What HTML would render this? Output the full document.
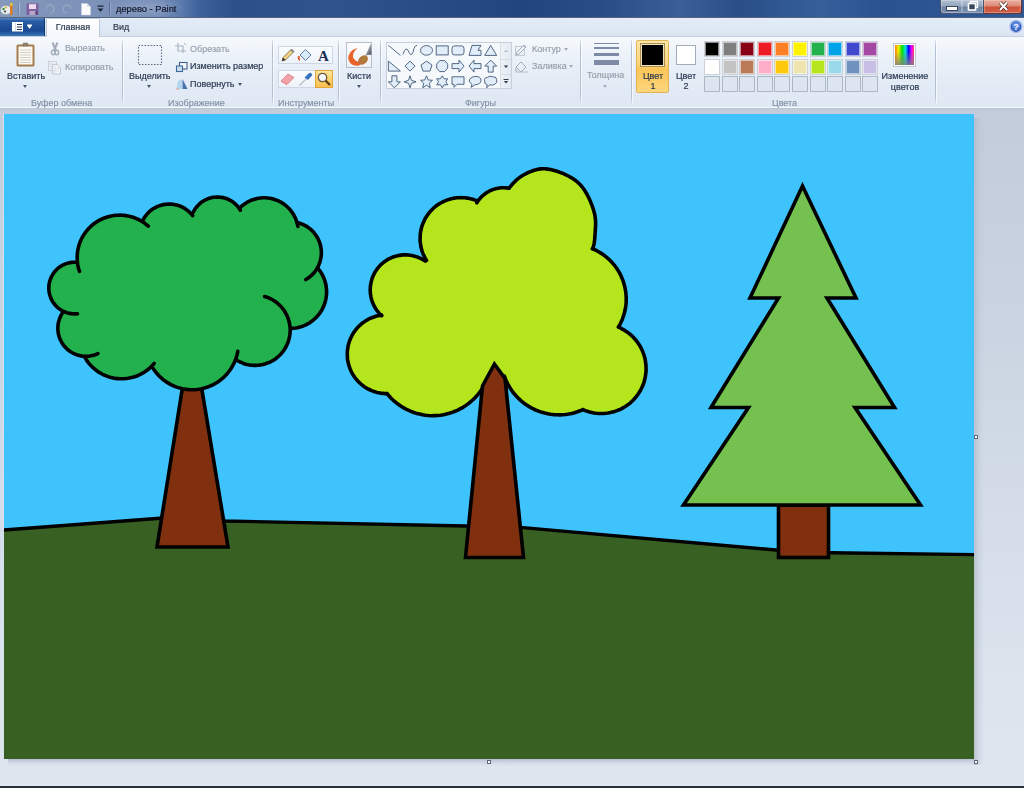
<!DOCTYPE html>
<html><head><meta charset="utf-8">
<style>
*{margin:0;padding:0;box-sizing:border-box}
html,body{width:1024px;height:788px;overflow:hidden;font-family:"Liberation Sans",sans-serif;-webkit-font-smoothing:antialiased}
body{position:relative;background:#dfe6f0}
.abs{position:absolute}
.t,.lbl{will-change:transform}
#title{left:0;top:0;width:1024px;height:18px;background:linear-gradient(90deg,#8599bb 0px,#7d93b9 60px,#7b91b8 110px,#748cb6 160px,#5a79ab 182px,#3d619b 200px,#2c5089 235px,#2e538d 330px,#2a4e88 400px,#23457f 520px,#284c86 600px,#3a5f98 680px,#2a4e88 740px,#35609a 820px,#2b5290 880px,#2f5894 1024px);border-bottom:1px solid #56657e}
#tabs{left:0;top:18px;width:1024px;height:18px;background:linear-gradient(#e3ecf7,#dbe5f2);}
#ribbon{left:0;top:36px;width:1024px;height:72px;background:linear-gradient(#f6f9fd 0%,#e9f0f8 35%,#e2eaf5 70%,#dfe8f3 100%);border-top:1px solid #c5d1e0}
#rbot{left:0;top:107px;width:1024px;height:2px;background:#f4f7fb;border-bottom:1px solid #b9c4d2}
#work{left:0;top:109px;width:1024px;height:679px;background:linear-gradient(#c2ccda 0%,#c8d2e0 25%,#d2dbe7 55%,#dce4ee 85%,#dfe6f0 100%)}
.t{position:absolute;white-space:nowrap;font-size:9px;color:#2b3a52;line-height:10px;letter-spacing:0;-webkit-text-stroke:0.2px currentColor}
.d{color:#939daa;-webkit-text-stroke:0.15px currentColor}
.lbl{position:absolute;white-space:nowrap;font-size:9px;color:#8290a4;line-height:10px;top:98px;-webkit-text-stroke:0.15px currentColor}
.sep{position:absolute;top:40px;width:1px;height:63px;background:linear-gradient(rgba(170,184,204,.3),#b3c0d2 12%,#b3c0d2 88%,rgba(170,184,204,.3));box-shadow:1px 0 0 rgba(255,255,255,.7)}
.arr{position:absolute;width:0;height:0;border-left:2.5px solid transparent;border-right:2.5px solid transparent;border-top:3px solid #44546c}
.cell{position:absolute;width:16px;height:16px;border:1px solid #cdd2da;padding:0;background:#fff}
.cell i{box-shadow:inset 0 0 0 1px rgba(255,255,255,.55)}
.cell i{display:block;width:100%;height:100%}
.ecell{position:absolute;width:16px;height:16px;border:1px solid #aeb7c4;background:#dde5f0}
</style></head><body>
<div id="title" class="abs"></div>
<div id="tabs" class="abs"></div>
<div id="ribbon" class="abs"></div>
<div id="rbot" class="abs"></div>
<div id="work" class="abs"></div>
<svg class="abs" style="left:0px;top:2px" width="14" height="14" viewBox="0 0 14 14"><ellipse cx="6" cy="8" rx="5.5" ry="4.5" fill="#e8eef0" stroke="#8a9aa8" stroke-width=".6"/><circle cx="3.5" cy="7" r="1.2" fill="#3a8a3a"/><circle cx="6" cy="5.5" r="1.1" fill="#d4b020"/><circle cx="5" cy="9.5" r="1.1" fill="#444"/><rect x="10" y="1" width="2.5" height="12" fill="#e07a20"/><rect x="10" y="1" width="2.5" height="3" fill="#e8c040"/></svg>
<div class="abs" style="left:18px;top:2px;width:1px;height:13px;background:#6d84a8;box-shadow:1px 0 0 #a9b9d2"></div>
<svg class="abs" style="left:25px;top:2px" width="15" height="14" viewBox="0 0 15 14"><rect x="1.5" y="1.5" width="12" height="11.5" rx="1" fill="#7d5a9e" opacity=".9"/><rect x="4" y="2.2" width="7" height="4.8" fill="#efdcef"/><rect x="4.5" y="9" width="6" height="4" fill="#b9a3c8"/><rect x="10.5" y="9.5" width="2" height="3" fill="#4f3a70"/></svg>
<svg class="abs" style="left:43px;top:3px" width="13" height="12" viewBox="0 0 13 12"><path d="M3 6 A4 4 0 1 1 7 10" fill="none" stroke="#98a9c2" stroke-width="1.8" opacity=".7"/></svg>
<svg class="abs" style="left:61px;top:3px" width="13" height="12" viewBox="0 0 13 12"><path d="M10 6 A4 4 0 1 0 6 10" fill="none" stroke="#98a9c2" stroke-width="1.8" opacity=".7"/></svg>
<svg class="abs" style="left:80px;top:2px" width="12" height="14" viewBox="0 0 12 14"><path d="M1.5 1.5 H7 L10.5 5 V13 H1.5 Z" fill="#fbfbfd" stroke="#c9d2df" stroke-width=".6"/><path d="M7 1.5 V5 H10.5" fill="#dfe4ec"/></svg>
<svg class="abs" style="left:96px;top:5px" width="9" height="8" viewBox="0 0 9 8"><rect x="1.5" y="0.5" width="6" height="1.2" fill="#1b2434"/><path d="M1.5 3.5 H7.5 L4.5 6.8 Z" fill="#1b2434"/></svg>
<div class="abs" style="left:109px;top:2px;width:1px;height:13px;background:#57709a;box-shadow:1px 0 0 #93a8c8"></div>
<div class="abs" style="left:106px;top:-2px;width:80px;height:20px;background:radial-gradient(ellipse at center,rgba(170,185,215,.45),rgba(170,185,215,0) 70%)"></div>
<div class="t" style="left:116px;top:4px;font-size:9.3px;color:#14182a">дерево - Paint</div>
<div class="abs" style="left:940px;top:0;width:23px;height:14px;border:1px solid rgba(40,55,85,.75);border-top:none;border-radius:0 0 0 3px;box-shadow:inset 0 0 0 1px rgba(255,255,255,.25);background:linear-gradient(#b4c1d4,#95a6be 45%,#6f84a3 55%,#7a90b0)"></div>
<div class="abs" style="left:962px;top:0;width:22px;height:14px;border:1px solid rgba(40,55,85,.75);border-top:none;border-left:none;box-shadow:inset 0 0 0 1px rgba(255,255,255,.25);background:linear-gradient(#b4c1d4,#95a6be 45%,#6f84a3 55%,#7a90b0)"></div>
<div class="abs" style="left:984px;top:0;width:38px;height:14px;border:1px solid rgba(70,30,30,.8);border-top:none;border-left:none;border-radius:0 0 3px 0;box-shadow:inset 0 0 0 1px rgba(255,220,210,.3);background:linear-gradient(#e8b0a2,#de8a76 45%,#cf5138 55%,#d2614a)"></div>
<div class="abs" style="left:947px;top:7px;width:10px;height:3px;background:#fff;box-shadow:0 0 0 1px rgba(30,40,60,.7)"></div>
<svg class="abs" style="left:964px;top:0px" width="18" height="13" viewBox="0 0 18 13"><rect x="6.5" y="1.5" width="7" height="6" fill="none" stroke="#fff" stroke-width="1.4"/><rect x="4.5" y="3.5" width="7" height="6.5" fill="#3a465c" stroke="#fff" stroke-width="1.6"/></svg>
<svg class="abs" style="left:996px;top:0px" width="15" height="13" viewBox="0 0 15 13"><path d="M4 2.5 L11 10 M11 2.5 L4 10" stroke="#4a2a28" stroke-width="3.4"/><path d="M4 2.5 L11 10 M11 2.5 L4 10" stroke="#fff" stroke-width="2.1"/></svg>
<div class="abs" style="left:0;top:18px;width:45px;height:18px;background:linear-gradient(#5a88c8 0px,#2a5ca6 3px,#1f4f98 9px,#1b4a92 13px,#2d68ae 16px,#3a76b8 18px);border-right:1px solid #14366e"></div>
<svg class="abs" style="left:10px;top:20px" width="30" height="14" viewBox="0 0 30 14"><rect x="2" y="2" width="11" height="9.5" fill="#fff"/><path d="M5.5 2.5 V11" stroke="#c5d3e6" stroke-width=".8"/><path d="M7 4.5 H12 M7 7 H12 M7 9.5 H12" stroke="#2a3550" stroke-width="1.1"/><path d="M17.5 5 L19.5 8 L21.5 5 Z" fill="#fff" stroke="#fff" stroke-width="1.2" stroke-linejoin="round"/></svg>
<div class="abs" style="left:46px;top:18px;width:54px;height:19px;background:linear-gradient(#ffffff,#f4f7fb);border:1px solid #bccadb;border-bottom:none;border-radius:2px 2px 0 0"></div>
<div class="t" style="left:33px;width:80px;text-align:center;top:22.4px;color:#2c3a4f">Главная</div>
<div class="t" style="left:113px;top:22.4px;color:#2c3a4f">Вид</div>
<svg class="abs" style="left:1008px;top:18px" width="17" height="17" viewBox="0 0 17 17"><circle cx="8" cy="8.5" r="6" fill="#3a66c6" stroke="#a9bde6" stroke-width="1.2"/><circle cx="8" cy="7" r="4" fill="#6f9ae6" opacity=".6"/><text x="8" y="12" font-family="Liberation Sans" font-size="9" font-weight="bold" text-anchor="middle" fill="#fff">?</text></svg>
<svg class="abs" style="left:14px;top:41px" width="24" height="28" viewBox="0 0 24 28"><rect x="2.5" y="3.5" width="18" height="22" rx="1.5" fill="#a37c4a"/><rect x="4.5" y="5.5" width="14" height="18" fill="#fbfaf6"/><path d="M6 9 H17 M6 11.5 H17 M6 14 H17 M6 16.5 H17 M6 19 H17 M6 21.5 H17" stroke="#c9c3b5" stroke-width=".8"/><rect x="9" y="2" width="5" height="3" rx=".8" fill="#8f8774" stroke="#6a604c" stroke-width=".5"/></svg>
<div class="t" style="left:6.6px;top:71.0px;">Вставить</div>
<div class="arr" style="left:22.9px;top:84.5px;border-top-color:#44546c"></div>
<svg class="abs" style="left:49px;top:41px" width="12" height="15" viewBox="0 0 12 15"><path d="M3.5 1.5 L7 9.5 M8.5 1.5 L5 9.5" stroke="#a3adb9" stroke-width="2"/><ellipse cx="4.3" cy="11.5" rx="1.9" ry="2.2" fill="none" stroke="#a3adb9" stroke-width="1.4"/><ellipse cx="7.7" cy="11.5" rx="1.9" ry="2.2" fill="none" stroke="#a3adb9" stroke-width="1.4"/></svg>
<div class="t d" style="left:64.7px;top:43.1px;">Вырезать</div>
<svg class="abs" style="left:47px;top:59px" width="16" height="16" viewBox="0 0 16 16"><rect x="1.5" y="2.5" width="8" height="9" fill="#eef1f5" stroke="#c3cad4" stroke-width=".8"/><path d="M1.5 5 H9.5 M1.5 7.5 H9.5 M4 2.5 V11.5" stroke="#d3d9e1" stroke-width=".6"/><path d="M5.5 5.5 H10 L13.5 9 V15 H5.5 Z" fill="#f3f5f8" stroke="#b5bdc8" stroke-width=".8"/><path d="M5.5 9.5 H13.5 M5.5 12 H13.5 M8 5.5 V15" stroke="#d3d9e1" stroke-width=".6"/></svg>
<div class="t d" style="left:64.7px;top:61.5px;">Копировать</div>
<div class="lbl" style="left:30.5px;top:97.0px;top:97.7px">Буфер обмена</div>
<div class="sep" style="left:122px"></div>
<svg class="abs" style="left:136px;top:43px" width="28" height="24" viewBox="0 0 28 24"><rect x="2.5" y="2.5" width="23" height="19" fill="none" stroke="#5a6b86" stroke-width="1.1" stroke-dasharray="1.6 1.4"/></svg>
<div class="t" style="left:129.4px;top:70.7px;">Выделить</div>
<div class="arr" style="left:146.5px;top:84.5px;border-top-color:#44546c"></div>
<svg class="abs" style="left:174px;top:42px" width="14" height="12" viewBox="0 0 14 12"><path d="M4 1 V9 H12 M1 4 H9 V11" fill="none" stroke="#aab3c0" stroke-width="1.2"/><path d="M10 1 L12 3" stroke="#aab3c0" stroke-width="1"/></svg>
<div class="t d" style="left:190.3px;top:43.7px;">Обрезать</div>
<svg class="abs" style="left:175px;top:61px" width="14" height="12" viewBox="0 0 14 12"><rect x="4.5" y="1.5" width="7.5" height="6.5" fill="#f4f8fc" stroke="#3f5f88" stroke-width="1.1"/><rect x="1.5" y="5" width="6" height="5.5" fill="#c9dcef" stroke="#3f6a98" stroke-width="1.1"/></svg>
<div class="t" style="left:190px;top:60.9px;">Изменить размер</div>
<svg class="abs" style="left:175px;top:78px" width="14" height="12" viewBox="0 0 14 12"><path d="M7.5 1 L12.5 11 H7.5 Z" fill="#4a73ad"/><path d="M1.5 11 L3 3 Q5 1.5 7 1.5 V11 Z" fill="#b3d6ef"/><path d="M1 11 H4" stroke="#e79a8a" stroke-width="1"/></svg>
<div class="t" style="left:190px;top:78.8px;">Повернуть</div>
<div class="arr" style="left:237.8px;top:82.9px;border-top-color:#44546c"></div>
<div class="lbl" style="left:167.7px;top:97.3px;top:98px">Изображение</div>
<div class="sep" style="left:272px"></div>
<div class="abs" style="left:278px;top:46px;width:55px;height:18px;border:1px solid #cdd6e2;background:linear-gradient(#fafcfe,#eef3f9)"></div>
<div class="abs" style="left:278px;top:70px;width:55px;height:18px;border:1px solid #cdd6e2;background:linear-gradient(#fafcfe,#eef3f9)"></div>
<div class="abs" style="left:315px;top:70px;width:18px;height:18px;border:1px solid #e2a53e;background:linear-gradient(#fde7a0,#fbd06a 50%,#f9c04e)"></div>
<svg class="abs" style="left:279px;top:47px" width="17" height="16" viewBox="0 0 17 16"><path d="M3 14 L4 10.5 L12.5 2 L15 4.5 L6.5 13 Z" fill="#f2d383" stroke="#7b6a46" stroke-width=".8"/><path d="M3 14 L4 10.5 L6.5 13 Z" fill="#333"/><path d="M12.5 2 L15 4.5 L13.8 5.7 L11.3 3.2 Z" fill="#888"/></svg>
<svg class="abs" style="left:297px;top:47px" width="17" height="16" viewBox="0 0 17 16"><path d="M8.5 2.5 L14 8 L8.5 13.5 L3 8 Z" fill="#d8ecf8" stroke="#5a7ea8" stroke-width="1"/><path d="M2 9 Q1 12 3 13" fill="none" stroke="#e0603a" stroke-width="2"/></svg>
<svg class="abs" style="left:315px;top:47px" width="17" height="16" viewBox="0 0 17 16"><text x="8.5" y="13.5" font-family="Liberation Serif" font-size="15" font-weight="bold" text-anchor="middle" fill="#1c2e55">A</text></svg>
<svg class="abs" style="left:279px;top:71px" width="17" height="16" viewBox="0 0 17 16"><path d="M2 10 L9 3 L15 6.5 L8 13.5 Z" fill="#f2a3a8" stroke="#d27a80" stroke-width=".8"/><path d="M2 10 L8 13.5 L8.5 14.5 L2.5 11 Z" fill="#e08088"/></svg>
<svg class="abs" style="left:297px;top:71px" width="17" height="16" viewBox="0 0 17 16"><path d="M2.5 14.5 L9 8" stroke="#b9c2cc" stroke-width="1.5"/><path d="M8 6.5 L12 2.5 Q14.5 1.5 15 4 L11 8.5 Z" fill="#2f74cc" stroke="#1f4f90" stroke-width=".6"/></svg>
<svg class="abs" style="left:315px;top:71px" width="18" height="16" viewBox="0 0 18 16"><circle cx="7.5" cy="6.5" r="4.2" fill="#f4f7fb" stroke="#6c5a3e" stroke-width="1.3"/><path d="M10.5 9.5 L15 14" stroke="#5b3a1a" stroke-width="2.2"/></svg>
<div class="lbl" style="left:277.6px;top:97.2px;top:98px">Инструменты</div>
<div class="sep" style="left:338px"></div>
<div class="abs" style="left:346px;top:42px;width:26px;height:26px;border:1px solid #b5bfcc;background:linear-gradient(#fdfdfe,#eef1f5)"></div>
<svg class="abs" style="left:346px;top:42px" width="26" height="26" viewBox="0 0 26 26"><defs><linearGradient id="hg" x1="0" y1="0" x2="1" y2="1"><stop offset="0" stop-color="#e8ebf0"/><stop offset="1" stop-color="#3c4452"/></linearGradient></defs><path d="M11.5 6 C5 7.5 1.5 13 2.5 17.5 C3.5 22 8 24.5 13 23.5 L17 20.5 C12 20.5 8 18.5 7 15 C6.5 11.5 8.5 8.5 11.5 6 Z" fill="#e8632a"/><path d="M19.5 13.5 L25 1.5 L25.5 12.5 Z" fill="url(#hg)"/><ellipse cx="17" cy="18" rx="5.5" ry="4" transform="rotate(-40 17 18)" fill="#b8743a"/><ellipse cx="18" cy="17" rx="3" ry="2" transform="rotate(-40 18 17)" fill="#9a8a3a" opacity=".6"/></svg>
<div class="t" style="left:346.8px;top:70.8px;">Кисти</div>
<div class="arr" style="left:356.5px;top:84.5px;border-top-color:#44546c"></div>
<div class="sep" style="left:380px"></div>
<div class="abs" style="left:386px;top:42px;width:126px;height:47px;border:1px solid #c6d0dc;background:#f6f9fc"></div>
<div class="abs" style="left:500px;top:43px;width:11px;height:45px;border-left:1px solid #d6dee8;background:linear-gradient(90deg,#eef2f7,#e3e9f1)"></div>
<div class="abs" style="left:501px;top:59px;width:10px;height:1px;background:#d5dde7"></div><div class="abs" style="left:501px;top:74px;width:10px;height:1px;background:#d5dde7"></div>
<svg class="abs" style="left:501px;top:44px" width="10" height="44" viewBox="0 0 10 44"><path d="M3 8 L5 6 L7 8 Z" fill="#a9b3c0"/><path d="M2.8 21.5 H7.2 L5 24 Z" fill="#2f3d52"/><rect x="2.5" y="35" width="5" height="1" fill="#2f3d52"/><path d="M2.8 37 H7.2 L5 39.5 Z" fill="#2f3d52"/></svg>
<svg class="abs" style="left:386px;top:42px" width="114" height="47" viewBox="0 0 114 47"><path transform="translate(8.399999999999977,8.399999999999999)" d="M-6 -5 L6 5" fill="none" stroke="#3f5877" stroke-width=".9" stroke-linejoin="round"/><path transform="translate(24,8.399999999999999)" d="M-7 4 Q-4 -6 -1 2 Q2 8 4 -2 Q5 -5 7 -5" fill="none" stroke="#3f5877" stroke-width=".9" stroke-linejoin="round"/><ellipse cx="40.5" cy="8.399999999999999" rx="6" ry="4.8" fill="#e1eef9" stroke="#3f5877" stroke-width=".9"/><rect x="50.19999999999999" y="3.8999999999999986" width="12" height="9" fill="#e1eef9" stroke="#3f5877" stroke-width=".9"/><rect x="66" y="3.8999999999999986" width="12" height="9" rx="2.5" fill="#e1eef9" stroke="#3f5877" stroke-width=".9"/><path transform="translate(89,8.399999999999999)" d="M-6 5 L-3 -5 H6 L3 0 H6 V5 Z" fill="#e1eef9" stroke="#3f5877" stroke-width=".9" stroke-linejoin="round"/><path transform="translate(104.69999999999999,8.399999999999999)" d="M0 -5 L6 5 H-6 Z" fill="#e1eef9" stroke="#3f5877" stroke-width=".9" stroke-linejoin="round"/><path transform="translate(8.399999999999977,24.099999999999994)" d="M-6 -5 L6 5 H-6 Z" fill="#e1eef9" stroke="#3f5877" stroke-width=".9" stroke-linejoin="round"/><path transform="translate(24,24.099999999999994)" d="M0 -5 L5 0 L0 5 L-5 0 Z" fill="#e1eef9" stroke="#3f5877" stroke-width=".9" stroke-linejoin="round"/><path transform="translate(40.5,24.099999999999994)" d="M0 -5 L5.5 -1 L3.5 5 H-3.5 L-5.5 -1 Z" fill="#e1eef9" stroke="#3f5877" stroke-width=".9" stroke-linejoin="round"/><path transform="translate(56.19999999999999,24.099999999999994)" d="M-2.5 -5.5 H2.5 L5.5 -2 V2 L2.5 5.5 H-2.5 L-5.5 2 V-2 Z" fill="#e1eef9" stroke="#3f5877" stroke-width=".9" stroke-linejoin="round"/><path transform="translate(72,24.099999999999994)" d="M-6 -2.5 H1 V-6 L6 0 L1 6 V2.5 H-6 Z" fill="#e1eef9" stroke="#3f5877" stroke-width=".9" stroke-linejoin="round"/><path transform="translate(89,24.099999999999994)" d="M6 -2.5 H-1 V-6 L-6 0 L-1 6 V2.5 H6 Z" fill="#e1eef9" stroke="#3f5877" stroke-width=".9" stroke-linejoin="round"/><path transform="translate(104.69999999999999,24.099999999999994)" d="M-2.5 6 V0 H-6 L0 -6 L6 0 H2.5 V6 Z" fill="#e1eef9" stroke="#3f5877" stroke-width=".9" stroke-linejoin="round"/><path transform="translate(8.399999999999977,39.8)" d="M-2.5 -6 V0 H-6 L0 6 L6 0 H2.5 V-6 Z" fill="#e1eef9" stroke="#3f5877" stroke-width=".9" stroke-linejoin="round"/><path transform="translate(24,39.8)" d="M0 -6 L1.5 -1.5 L6 0 L1.5 1.5 L0 6 L-1.5 1.5 L-6 0 L-1.5 -1.5 Z" fill="#e1eef9" stroke="#3f5877" stroke-width=".9" stroke-linejoin="round"/><path transform="translate(40.5,39.8)" d="M0 -6 L1.8 -1.8 L6 -1.5 L2.8 1.5 L3.8 6 L0 3.5 L-3.8 6 L-2.8 1.5 L-6 -1.5 L-1.8 -1.8 Z" fill="#e1eef9" stroke="#3f5877" stroke-width=".9" stroke-linejoin="round"/><path transform="translate(56.19999999999999,39.8)" d="M0 -6 L1.8 -3 H5.5 L3.6 0 L5.5 3 H1.8 L0 6 L-1.8 3 H-5.5 L-3.6 0 L-5.5 -3 H-1.8 Z" fill="#e1eef9" stroke="#3f5877" stroke-width=".9" stroke-linejoin="round"/><path transform="translate(72,39.8)" d="M-6 -5 H6 V2.5 H-1 L-4 5.5 V2.5 H-6 Z" fill="#e1eef9" stroke="#3f5877" stroke-width=".9" stroke-linejoin="round"/><path transform="translate(89,39.8)" d="M-4 5.5 L-3 2.5 Q-7 0 -5.5 -2.5 Q-3 -5.5 1 -5.5 Q6 -5 6 -1.5 Q6 2.5 0 3 Z" fill="#e1eef9" stroke="#3f5877" stroke-width=".9" stroke-linejoin="round"/><path transform="translate(104.69999999999999,39.8)" d="M-4 6 L-3.5 3 Q-7 2 -6 -1 Q-7 -4 -3 -4.5 Q-1 -6.5 2 -5 Q6 -5.5 6 -2 Q7 1 4 2.5 Q2 4 -1 3 Z" fill="#e1eef9" stroke="#3f5877" stroke-width=".9" stroke-linejoin="round"/></svg>
<svg class="abs" style="left:514px;top:43px" width="16" height="14" viewBox="0 0 16 14"><path d="M2 12 L3 9 L10 2 L12 4 L5 11 Z" fill="none" stroke="#a3adba" stroke-width="1"/><rect x="1.5" y="3.5" width="9" height="9" fill="none" stroke="#b6bfca" stroke-width=".8"/></svg>
<div class="t d" style="left:531.7px;top:43.7px;">Контур</div>
<div class="arr" style="left:563.8px;top:47.5px;border-top-color:#a3adba"></div>
<svg class="abs" style="left:514px;top:60px" width="16" height="14" viewBox="0 0 16 14"><path d="M2 12 H14" stroke="#b6bfca" stroke-width="1"/><path d="M7 2 L12 7 L7 12 L2 7 Z" fill="none" stroke="#a3adba" stroke-width="1"/><path d="M2 8 Q1 11 3 12" fill="none" stroke="#b3bcc8" stroke-width="1.3"/></svg>
<div class="t d" style="left:531.7px;top:60.9px;">Заливка</div>
<div class="arr" style="left:568.8px;top:64.5px;border-top-color:#a3adba"></div>
<div class="lbl" style="left:464.8px;top:97.4px;top:98px">Фигуры</div>
<div class="sep" style="left:580px"></div>
<div class="abs" style="left:594px;top:42.5px;width:25px;height:1px;background:#7d8ba6"></div>
<div class="abs" style="left:594px;top:47px;width:25px;height:2px;background:#7d8ba6"></div>
<div class="abs" style="left:594px;top:52.5px;width:25px;height:3px;background:#7d8ba6"></div>
<div class="abs" style="left:594px;top:59.5px;width:25px;height:5px;background:#7d8ba6"></div>
<div class="t d" style="left:586.5px;top:70.4px;">Толщина</div>
<div class="arr" style="left:603.1px;top:84.5px;border-top-color:#a3adba"></div>
<div class="sep" style="left:631px"></div>
<div class="abs" style="left:636px;top:40px;width:33px;height:53px;border:1px solid #e6b054;border-radius:2px;background:linear-gradient(#fde9a8,#fcd57a 45%,#fbc658 55%,#fcd67c)"></div>
<div class="abs" style="left:640px;top:43px;width:25px;height:24px;border:1px solid #a98b55;background:#000;box-shadow:inset 0 0 0 1px #f4e3b8"></div>
<div class="abs" style="left:642px;top:45px;width:21px;height:20px;background:#000"></div>
<div class="t" style="left:612.5px;width:80px;text-align:center;top:70.8px;color:#2b3648">Цвет</div>
<div class="t" style="left:612.5px;width:80px;text-align:center;top:81.1px;color:#2b3648">1</div>
<div class="abs" style="left:676px;top:45px;width:20px;height:20px;border:1px solid #a2abb8;background:#fff"></div>
<div class="t" style="left:646px;width:80px;text-align:center;top:70.8px;">Цвет</div>
<div class="t" style="left:646px;width:80px;text-align:center;top:81.1px;">2</div>
<div class="cell" style="left:704.0px;top:41px"><i style="background:#000000"></i></div>
<div class="cell" style="left:721.6px;top:41px"><i style="background:#7f7f7f"></i></div>
<div class="cell" style="left:739.2px;top:41px"><i style="background:#880015"></i></div>
<div class="cell" style="left:756.8px;top:41px"><i style="background:#ed1c24"></i></div>
<div class="cell" style="left:774.4px;top:41px"><i style="background:#ff7f27"></i></div>
<div class="cell" style="left:792.0px;top:41px"><i style="background:#fff200"></i></div>
<div class="cell" style="left:809.6px;top:41px"><i style="background:#22b14c"></i></div>
<div class="cell" style="left:827.2px;top:41px"><i style="background:#00a2e8"></i></div>
<div class="cell" style="left:844.8px;top:41px"><i style="background:#3f48cc"></i></div>
<div class="cell" style="left:862.4px;top:41px"><i style="background:#a349a4"></i></div>
<div class="cell" style="left:704.0px;top:58.5px"><i style="background:#ffffff"></i></div>
<div class="cell" style="left:721.6px;top:58.5px"><i style="background:#c3c3c3"></i></div>
<div class="cell" style="left:739.2px;top:58.5px"><i style="background:#b97a57"></i></div>
<div class="cell" style="left:756.8px;top:58.5px"><i style="background:#ffaec9"></i></div>
<div class="cell" style="left:774.4px;top:58.5px"><i style="background:#ffc90e"></i></div>
<div class="cell" style="left:792.0px;top:58.5px"><i style="background:#efe4b0"></i></div>
<div class="cell" style="left:809.6px;top:58.5px"><i style="background:#b5e61d"></i></div>
<div class="cell" style="left:827.2px;top:58.5px"><i style="background:#99d9ea"></i></div>
<div class="cell" style="left:844.8px;top:58.5px"><i style="background:#7092be"></i></div>
<div class="cell" style="left:862.4px;top:58.5px"><i style="background:#c8bfe7"></i></div>
<div class="ecell" style="left:704.0px;top:76px"></div>
<div class="ecell" style="left:721.6px;top:76px"></div>
<div class="ecell" style="left:739.2px;top:76px"></div>
<div class="ecell" style="left:756.8px;top:76px"></div>
<div class="ecell" style="left:774.4px;top:76px"></div>
<div class="ecell" style="left:792.0px;top:76px"></div>
<div class="ecell" style="left:809.6px;top:76px"></div>
<div class="ecell" style="left:827.2px;top:76px"></div>
<div class="ecell" style="left:844.8px;top:76px"></div>
<div class="ecell" style="left:862.4px;top:76px"></div>
<div class="abs" style="left:893px;top:43px;width:23px;height:24px;border:1px solid #c3c9d2;padding:1px;background:#fff"><div style="width:100%;height:100%;background:linear-gradient(rgba(128,128,128,0) 30%,rgba(128,128,128,.85) 100%),linear-gradient(90deg,#ff8000,#f0f000 18%,#00e000 38%,#00e0e0 55%,#0000ff 72%,#ff00ff 88%,#ff4060)"></div></div>
<div class="t" style="left:864.7px;width:80px;text-align:center;top:70.9px;">Изменение</div>
<div class="t" style="left:864.5px;width:80px;text-align:center;top:81.7px;">цветов</div>
<div class="lbl" style="left:771.7px;top:97.1px;top:98px">Цвета</div>
<div class="sep" style="left:935px"></div>
<svg class="abs" style="left:0;top:0" width="1024" height="788" viewBox="0 0 1024 788">
<defs><clipPath id="cv"><rect x="4" y="114" width="970" height="645"/></clipPath>
<linearGradient id="shr" x1="0" x2="1" y1="0" y2="0"><stop offset="0" stop-color="#aeb8c6" stop-opacity=".75"/><stop offset=".5" stop-color="#b8c2cf" stop-opacity=".35"/><stop offset="1" stop-color="#c0c9d6" stop-opacity="0"/></linearGradient>
<linearGradient id="shb" x1="0" x2="0" y1="0" y2="1"><stop offset="0" stop-color="#aab5c8" stop-opacity=".8"/><stop offset=".5" stop-color="#b8c2d4" stop-opacity=".4"/><stop offset="1" stop-color="#c0c9d6" stop-opacity="0"/></linearGradient></defs>
<rect x="974" y="118" width="10" height="647" fill="url(#shr)"/>
<rect x="8" y="759" width="966" height="7" fill="url(#shb)"/>
<rect x="3" y="114" width="1" height="645" fill="#d8e0f2"/>
<rect x="4" y="114" width="970" height="645" fill="#3ec3fd"/>
<g clip-path="url(#cv)">
<path d="M4 530 L160 518.3 Q192 516 225 521 L466 526 L523 527.6 L776 550 Q800 552.2 830 552.7 L974 554.7 L974 759 L4 759 Z" fill="#376022"/>
<path d="M2 530.2 L160 518.3 Q192 516 225 521 L466 526 L523 527.6 L776 550 Q800 552.2 830 552.7 L976 554.7" fill="none" stroke="#000" stroke-width="3.4"/>
<polygon points="184,378 200,378 228,547 157,547" fill="#80300e" stroke="#000" stroke-width="3.6" stroke-linejoin="miter"/>
<polygon points="77.5,262.9 77.3,260.7 77.2,258.5 77.2,256.3 77.3,254.1 77.5,251.9 77.9,249.7 78.4,247.5 79.0,245.4 79.6,243.3 80.5,241.2 81.4,239.2 82.4,237.2 83.5,235.3 84.7,233.4 86.0,231.7 87.4,229.9 88.9,228.3 90.5,226.7 92.1,225.2 93.8,223.9 95.6,222.6 97.5,221.3 99.4,220.2 101.4,219.2 103.4,218.3 105.5,217.5 107.6,216.9 109.8,216.3 111.9,215.8 114.1,215.5 116.3,215.3 118.5,215.1 120.8,215.1 123.0,215.3 125.2,215.5 127.4,215.8 129.5,216.3 131.7,216.9 133.8,217.5 135.9,218.3 137.9,219.2 139.9,220.2 141.8,221.3 142.7,220.7 143.4,219.3 144.1,218.0 145.0,216.7 145.9,215.5 146.8,214.3 147.9,213.2 148.9,212.1 150.1,211.1 151.3,210.1 152.5,209.2 153.8,208.4 155.1,207.6 156.5,206.9 157.9,206.3 159.3,205.8 160.7,205.3 162.2,204.9 163.7,204.6 165.2,204.3 166.7,204.1 168.2,204.1 169.8,204.0 171.3,204.1 172.8,204.3 174.3,204.5 175.8,204.8 177.3,205.2 178.7,205.6 180.2,206.2 181.6,206.8 182.9,207.4 184.3,208.2 185.6,209.0 186.8,209.9 188.0,210.8 189.2,211.8 190.3,212.9 191.3,214.0 193.1,212.6 193.7,211.3 194.4,210.1 195.1,209.0 195.9,207.9 196.7,206.8 197.6,205.7 198.6,204.8 199.6,203.8 200.6,202.9 201.7,202.1 202.8,201.3 204.0,200.6 205.2,200.0 206.4,199.4 207.7,198.8 209.0,198.4 210.3,198.0 211.6,197.7 212.9,197.4 214.3,197.2 215.6,197.1 217.0,197.0 218.4,197.0 219.7,197.1 221.1,197.3 222.4,197.5 223.8,197.8 225.1,198.2 226.4,198.6 227.7,199.1 228.9,199.7 230.1,200.3 231.3,201.0 232.4,201.7 233.6,202.5 234.6,203.4 235.6,204.3 236.6,205.2 237.5,206.2 238.4,207.3 239.2,208.4 240.1,207.6 241.4,206.4 242.8,205.3 244.2,204.2 245.6,203.2 247.1,202.3 248.7,201.4 250.3,200.7 251.9,200.0 253.6,199.4 255.3,198.9 257.0,198.5 258.8,198.2 260.5,198.0 262.3,197.8 264.0,197.8 265.8,197.8 267.6,198.0 269.3,198.2 271.1,198.5 272.8,198.9 274.5,199.4 276.2,200.0 277.8,200.6 279.4,201.4 281.0,202.2 282.5,203.1 284.0,204.1 285.4,205.2 286.7,206.3 288.0,207.5 289.3,208.8 290.4,210.1 291.5,211.5 292.5,213.0 293.5,214.5 294.3,216.0 295.1,217.6 295.8,219.2 296.5,220.9 297.0,222.6 297.2,222.5 298.7,222.9 300.3,223.4 301.8,223.9 303.2,224.6 304.7,225.3 306.1,226.0 307.4,226.9 308.7,227.8 310.0,228.8 311.2,229.8 312.4,230.9 313.5,232.1 314.5,233.3 315.5,234.6 316.4,235.9 317.2,237.2 318.0,238.6 318.7,240.1 319.3,241.6 319.8,243.1 320.3,244.6 320.6,246.1 320.9,247.7 321.2,249.3 321.3,250.9 321.4,252.5 321.3,254.1 321.2,255.7 321.0,257.2 320.7,258.8 320.4,260.4 320.0,261.9 319.4,263.4 318.9,264.9 318.2,266.4 317.4,267.8 317.5,267.8 318.7,269.3 319.9,270.8 320.9,272.4 321.9,274.0 322.8,275.7 323.6,277.4 324.3,279.2 324.9,281.0 325.4,282.8 325.9,284.7 326.2,286.6 326.4,288.5 326.6,290.4 326.6,292.3 326.5,294.2 326.3,296.1 326.1,298.0 325.7,299.9 325.2,301.7 324.7,303.5 324.0,305.3 323.3,307.1 322.4,308.8 321.5,310.5 320.5,312.1 319.4,313.6 318.2,315.1 317.0,316.6 315.7,317.9 314.3,319.2 312.8,320.5 311.3,321.6 309.7,322.7 308.1,323.7 306.4,324.6 304.6,325.4 302.9,326.1 301.1,326.7 299.2,327.2 297.4,327.7 295.5,328.0 293.6,328.2 291.7,328.4 290.1,328.5 290.2,330.3 290.1,332.1 290.0,333.9 289.7,335.7 289.4,337.5 289.0,339.2 288.5,341.0 287.9,342.7 287.2,344.4 286.4,346.0 285.6,347.6 284.6,349.2 283.6,350.7 282.5,352.1 281.4,353.5 280.1,354.8 278.8,356.1 277.5,357.3 276.0,358.4 274.6,359.4 273.0,360.4 271.5,361.3 269.8,362.1 268.2,362.8 266.5,363.5 264.8,364.0 263.0,364.5 261.2,364.8 259.4,365.1 257.6,365.3 255.8,365.4 254.0,365.4 252.2,365.3 250.4,365.1 248.6,364.8 246.8,364.4 245.1,363.9 243.4,363.4 241.7,362.7 240.0,362.0 238.4,361.2 236.8,360.3 235.1,360.8 234.1,363.0 233.0,365.1 231.9,367.2 230.6,369.3 229.2,371.2 227.7,373.1 226.1,374.9 224.4,376.6 222.6,378.3 220.8,379.8 218.8,381.2 216.8,382.6 214.8,383.8 212.6,384.9 210.4,385.9 208.2,386.8 205.9,387.6 203.6,388.3 201.3,388.8 198.9,389.2 196.5,389.5 194.1,389.7 191.7,389.7 189.3,389.6 186.9,389.4 184.5,389.1 182.1,388.6 179.8,388.1 177.5,387.4 175.2,386.5 173.0,385.6 170.8,384.6 168.7,383.4 166.7,382.1 164.7,380.8 162.8,379.3 161.0,377.7 159.2,376.0 157.6,374.3 156.0,372.5 154.5,370.5 153.2,368.6 150.7,367.1 149.1,368.6 147.5,369.9 145.7,371.2 143.9,372.4 142.1,373.5 140.2,374.5 138.2,375.4 136.2,376.2 134.2,376.9 132.1,377.5 130.0,378.0 127.9,378.3 125.8,378.6 123.6,378.8 121.5,378.8 119.3,378.7 117.2,378.6 115.0,378.3 112.9,377.9 110.8,377.4 108.8,376.8 106.7,376.1 104.7,375.3 102.8,374.4 100.9,373.4 99.0,372.3 97.2,371.1 95.5,369.8 93.9,368.4 92.3,367.0 90.8,365.4 89.3,363.8 88.0,362.1 86.7,360.4 85.6,358.6 84.5,356.7 84.0,356.3 82.6,356.1 81.2,355.9 79.7,355.6 78.3,355.3 76.9,354.8 75.6,354.3 74.2,353.8 72.9,353.1 71.6,352.4 70.4,351.6 69.2,350.8 68.1,349.9 67.0,349.0 65.9,347.9 64.9,346.9 64.0,345.8 63.1,344.6 62.3,343.4 61.5,342.1 60.8,340.9 60.2,339.5 59.7,338.2 59.2,336.8 58.8,335.4 58.5,334.0 58.2,332.6 58.0,331.1 57.9,329.7 57.9,328.2 57.9,326.8 58.0,325.3 58.2,323.9 58.5,322.4 58.8,321.0 59.3,319.6 59.7,318.2 60.3,316.9 60.9,315.6 61.6,314.3 62.4,313.1 63.2,311.9 63.7,311.4 62.5,310.8 61.3,310.2 60.2,309.5 59.1,308.7 58.0,307.8 57.0,307.0 56.1,306.0 55.2,305.0 54.3,304.0 53.5,302.9 52.8,301.8 52.1,300.7 51.5,299.5 50.9,298.3 50.4,297.0 50.0,295.8 49.6,294.5 49.3,293.2 49.1,291.9 48.9,290.5 48.9,289.2 48.8,287.9 48.9,286.5 49.0,285.2 49.2,283.9 49.4,282.6 49.7,281.3 50.1,280.0 50.6,278.7 51.1,277.5 51.7,276.3 52.3,275.1 53.0,274.0 53.8,272.9 54.6,271.8 55.4,270.8 56.4,269.8 57.3,268.9 58.4,268.0 59.4,267.2 60.5,266.4 61.6,265.7 62.8,265.1 64.0,264.5 65.3,264.0 66.5,263.5 67.8,263.1 69.1,262.8 70.4,262.6 71.7,262.4 73.1,262.3 74.4,262.2 75.7,262.2 77.1,262.3" fill="#22b14c"/>
<polyline points="79.5,271.4 78.8,269.3 78.2,267.2 77.8,265.0 77.5,262.9 77.3,260.7 77.2,258.5 77.2,256.3 77.3,254.1 77.5,251.9 77.9,249.7 78.4,247.6 78.9,245.4 79.6,243.4 80.4,241.3 81.3,239.3 82.3,237.3 83.4,235.4 84.6,233.6 85.9,231.8 87.3,230.1 88.7,228.5 90.3,226.9 91.9,225.4 93.6,224.0 95.4,222.7 97.2,221.5 99.1,220.4 101.1,219.4 103.1,218.5 105.1,217.7 107.2,217.0 109.3,216.4 111.5,215.9 113.7,215.5 115.8,215.3 118.0,215.2 120.2,215.1 122.4,215.2 124.6,215.4 126.8,215.7 129.0,216.2 131.1,216.7 133.2,217.3 135.3,218.1 137.3,219.0 139.3,219.9 141.2,221.0 143.1,222.1 144.9,223.4 146.6,224.8 148.3,226.2" fill="none" stroke="#000" stroke-width="3.6" stroke-linecap="round" stroke-linejoin="round"/>
<polyline points="142.7,220.7 143.4,219.3 144.1,218.0 144.9,216.8 145.8,215.6 146.8,214.4 147.8,213.3 148.8,212.2 150.0,211.2 151.1,210.2 152.3,209.3 153.6,208.5 154.9,207.8 156.2,207.1 157.6,206.4 159.0,205.9 160.4,205.4 161.9,205.0 163.3,204.6 164.8,204.4 166.3,204.2 167.8,204.1 169.3,204.0 170.8,204.1 172.3,204.2 173.8,204.4 175.3,204.7 176.7,205.0 178.2,205.4 179.6,205.9 181.0,206.5 182.4,207.1 183.7,207.8 185.0,208.6 186.2,209.5 187.4,210.4 188.6,211.3 189.7,212.3 190.8,213.4 191.8,214.5 192.7,215.7" fill="none" stroke="#000" stroke-width="3.6" stroke-linecap="round" stroke-linejoin="round"/>
<polyline points="193.1,212.6 193.7,211.3 194.4,210.1 195.1,208.9 195.9,207.8 196.8,206.7 197.7,205.7 198.7,204.7 199.7,203.7 200.7,202.8 201.8,202.0 203.0,201.2 204.2,200.5 205.4,199.9 206.7,199.3 207.9,198.7 209.2,198.3 210.6,197.9 211.9,197.6 213.3,197.3 214.7,197.2 216.0,197.1 217.4,197.0 218.8,197.1 220.2,197.2 221.6,197.4 222.9,197.6 224.3,197.9 225.6,198.3 226.9,198.8 228.2,199.3 229.4,199.9 230.7,200.6 231.8,201.3 233.0,202.1 234.1,202.9 235.1,203.8 236.1,204.8 237.1,205.8 238.0,206.8 238.9,207.9 239.6,209.1 240.4,210.2" fill="none" stroke="#000" stroke-width="3.6" stroke-linecap="round" stroke-linejoin="round"/>
<polyline points="240.1,207.6 241.4,206.4 242.8,205.2 244.2,204.2 245.7,203.2 247.2,202.3 248.8,201.4 250.4,200.7 252.0,200.0 253.7,199.4 255.4,198.9 257.1,198.5 258.9,198.2 260.6,198.0 262.4,197.8 264.2,197.8 266.0,197.8 267.8,198.0 269.5,198.2 271.3,198.5 273.0,199.0 274.7,199.5 276.4,200.1 278.0,200.7 279.6,201.5 281.2,202.4 282.7,203.3 284.2,204.3 285.6,205.4 286.9,206.5 288.2,207.7 289.5,209.0 290.6,210.4 291.7,211.8 292.7,213.3 293.7,214.8 294.5,216.3 295.3,217.9 296.0,219.6 296.6,221.2 297.1,222.9 297.5,224.7 297.9,226.4" fill="none" stroke="#000" stroke-width="3.6" stroke-linecap="round" stroke-linejoin="round"/>
<polyline points="297.2,222.5 298.8,222.9 300.3,223.4 301.8,224.0 303.3,224.6 304.7,225.3 306.2,226.1 307.5,226.9 308.8,227.9 310.1,228.9 311.3,229.9 312.5,231.0 313.6,232.2 314.6,233.5 315.6,234.8 316.5,236.1 317.3,237.5 318.1,238.9 318.8,240.4 319.4,241.9 319.9,243.4 320.4,244.9 320.7,246.5 321.0,248.1 321.2,249.7 321.3,251.3 321.4,252.9 321.3,254.5 321.2,256.1 320.9,257.7 320.6,259.3 320.3,260.9 319.8,262.4 319.2,263.9 318.6,265.4 317.9,266.9 317.1,268.3 316.3,269.7 315.4,271.0 314.4,272.3 313.3,273.5 312.2,274.7 311.0,275.8 309.8,276.8 308.5,277.8 307.2,278.7 305.8,279.5" fill="none" stroke="#000" stroke-width="3.6" stroke-linecap="round" stroke-linejoin="round"/>
<polyline points="317.5,267.8 318.7,269.3 319.9,270.8 320.9,272.4 321.9,274.0 322.8,275.7 323.6,277.4 324.3,279.2 324.9,281.0 325.4,282.8 325.9,284.7 326.2,286.6 326.4,288.5 326.6,290.4 326.6,292.3 326.5,294.2 326.3,296.1 326.1,298.0 325.7,299.9 325.2,301.7 324.7,303.5 324.0,305.3 323.3,307.1 322.4,308.8 321.5,310.5 320.5,312.1 319.4,313.6 318.2,315.1 317.0,316.6 315.7,317.9 314.3,319.2 312.8,320.5 311.3,321.6 309.7,322.7 308.1,323.7 306.4,324.6 304.6,325.4 302.9,326.1 301.1,326.7 299.2,327.2 297.4,327.7 295.5,328.0 293.6,328.2 291.7,328.4" fill="none" stroke="#000" stroke-width="3.6" stroke-linecap="round" stroke-linejoin="round"/>
<polyline points="264.6,296.5 266.3,297.0 268.0,297.6 269.7,298.4 271.3,299.2 272.9,300.0 274.5,301.0 275.9,302.0 277.4,303.2 278.7,304.3 280.1,305.6 281.3,306.9 282.5,308.3 283.6,309.8 284.6,311.3 285.5,312.8 286.4,314.4 287.2,316.1 287.8,317.7 288.4,319.4 289.0,321.2 289.4,323.0 289.7,324.7 290.0,326.5 290.1,328.3 290.2,330.2 290.1,332.0 290.0,333.8 289.7,335.6 289.4,337.4 289.0,339.1 288.5,340.9 287.9,342.6 287.2,344.3 286.5,345.9 285.6,347.5 284.7,349.1 283.7,350.6 282.6,352.0 281.4,353.4 280.2,354.8 278.9,356.0 277.5,357.2 276.1,358.4 274.6,359.4 273.1,360.4 271.5,361.3 269.9,362.1 268.2,362.8 266.5,363.4 264.8,364.0 263.0,364.5 261.3,364.8 259.5,365.1 257.7,365.3 255.9,365.4 254.0,365.4 252.2,365.3 250.4,365.1 248.6,364.8 246.9,364.4 245.1,363.9 243.4,363.4 241.7,362.7 240.0,362.0 238.4,361.2 236.8,360.3" fill="none" stroke="#000" stroke-width="3.6" stroke-linecap="round" stroke-linejoin="round"/>
<polyline points="237.8,351.3 237.3,353.6 236.7,356.0 236.0,358.3 235.2,360.5 234.2,362.8 233.1,364.9 232.0,367.0 230.7,369.1 229.3,371.0 227.8,372.9 226.2,374.8 224.5,376.5 222.8,378.1 220.9,379.7 219.0,381.1 217.0,382.5 214.9,383.7 212.8,384.9 210.6,385.9 208.3,386.8 206.1,387.6 203.7,388.2 201.4,388.8 199.0,389.2 196.6,389.5 194.2,389.7 191.8,389.7 189.4,389.6 187.0,389.4 184.6,389.1 182.2,388.7 179.9,388.1 177.6,387.4 175.3,386.6 173.1,385.6 170.9,384.6 168.8,383.4 166.7,382.1 164.7,380.8 162.8,379.3 161.0,377.7 159.2,376.1 157.6,374.3 156.0,372.5 154.5,370.5 153.2,368.6" fill="none" stroke="#000" stroke-width="3.6" stroke-linecap="round" stroke-linejoin="round"/>
<polyline points="154.2,363.4 152.8,365.0 151.3,366.6 149.7,368.1 148.0,369.5 146.3,370.8 144.5,372.0 142.6,373.2 140.7,374.2 138.8,375.1 136.8,376.0 134.7,376.7 132.6,377.3 130.5,377.8 128.4,378.3 126.2,378.5 124.1,378.7 121.9,378.8 119.7,378.8 117.6,378.6 115.4,378.4 113.3,378.0 111.2,377.5 109.1,376.9 107.0,376.2 105.0,375.4 103.0,374.5 101.1,373.5 99.2,372.4 97.4,371.2 95.7,369.9 94.0,368.5 92.4,367.1 90.8,365.5 89.4,363.9 88.0,362.2 86.8,360.4 85.6,358.6 84.5,356.7" fill="none" stroke="#000" stroke-width="3.6" stroke-linecap="round" stroke-linejoin="round"/>
<polyline points="97.9,353.6 96.6,354.2 95.2,354.7 93.8,355.2 92.4,355.5 91.0,355.8 89.6,356.1 88.1,356.2 86.7,356.3 85.2,356.3 83.8,356.2 82.4,356.1 80.9,355.9 79.5,355.6 78.1,355.2 76.7,354.8 75.4,354.3 74.0,353.7 72.7,353.0 71.5,352.3 70.2,351.5 69.1,350.7 67.9,349.8 66.8,348.8 65.8,347.8 64.8,346.8 63.9,345.6 63.0,344.5 62.2,343.3 61.5,342.0 60.8,340.7 60.2,339.4 59.6,338.1 59.2,336.7 58.8,335.3 58.4,333.9 58.2,332.5 58.0,331.0 57.9,329.6 57.9,328.1 57.9,326.7 58.0,325.2 58.2,323.8 58.5,322.4 58.8,321.0 59.3,319.6 59.7,318.2 60.3,316.9 60.9,315.6 61.6,314.3 62.4,313.1 63.2,311.9" fill="none" stroke="#000" stroke-width="3.6" stroke-linecap="round" stroke-linejoin="round"/>
<polyline points="77.5,313.7 76.2,313.9 74.8,313.9 73.5,313.9 72.1,313.8 70.8,313.6 69.5,313.4 68.1,313.1 66.8,312.7 65.6,312.2 64.3,311.7 63.1,311.2 61.9,310.5 60.7,309.8 59.6,309.1 58.6,308.3 57.5,307.4 56.5,306.5 55.6,305.5 54.7,304.5 53.9,303.4 53.1,302.3 52.4,301.2 51.7,300.0 51.1,298.8 50.6,297.5 50.2,296.2 49.8,295.0 49.4,293.6 49.2,292.3 49.0,291.0 48.9,289.6 48.8,288.3 48.9,286.9 48.9,285.6 49.1,284.2 49.3,282.9 49.6,281.6 50.0,280.3 50.5,279.0 51.0,277.8 51.5,276.5 52.2,275.4 52.9,274.2 53.6,273.1 54.4,272.0 55.3,271.0 56.2,270.0 57.2,269.0 58.2,268.1 59.3,267.3 60.4,266.5 61.5,265.8 62.7,265.2 63.9,264.6 65.1,264.0 66.4,263.6 67.7,263.2 69.0,262.8 70.3,262.6 71.7,262.4 73.0,262.3 74.4,262.2 75.7,262.2 77.1,262.3" fill="none" stroke="#000" stroke-width="3.6" stroke-linecap="round" stroke-linejoin="round"/>
<polygon points="387.1,393.6 385.0,393.6 383.0,393.4 380.9,393.2 378.9,392.8 376.9,392.4 374.9,391.8 373.0,391.2 371.1,390.4 369.2,389.5 367.4,388.6 365.6,387.5 363.9,386.4 362.3,385.1 360.7,383.8 359.2,382.4 357.7,381.0 356.4,379.4 355.1,377.8 353.9,376.1 352.8,374.4 351.8,372.6 350.9,370.7 350.1,368.9 349.4,366.9 348.8,365.0 348.3,363.0 347.8,361.0 347.5,358.9 347.4,356.9 347.3,354.8 347.3,352.8 347.4,350.7 347.7,348.7 348.0,346.6 348.4,344.6 349.0,342.7 349.6,340.7 350.4,338.8 351.3,336.9 352.2,335.1 353.2,333.3 354.4,331.6 355.6,330.0 356.9,328.4 358.3,326.8 359.8,325.4 361.3,324.0 362.9,322.8 364.6,321.6 366.3,320.5 368.1,319.4 369.9,318.5 371.8,317.7 373.8,317.0 375.7,316.3 377.7,315.8 379.7,315.4 381.7,315.1 381.6,315.7 380.3,314.4 379.1,313.1 377.9,311.7 376.8,310.3 375.8,308.8 374.8,307.2 374.0,305.6 373.2,304.0 372.5,302.3 371.9,300.6 371.4,298.9 371.0,297.1 370.7,295.3 370.4,293.5 370.3,291.7 370.2,289.9 370.3,288.1 370.4,286.3 370.7,284.5 371.0,282.7 371.4,280.9 371.9,279.2 372.5,277.4 373.2,275.8 374.0,274.1 374.8,272.5 375.8,271.0 376.8,269.5 377.9,268.0 379.1,266.6 380.3,265.3 381.6,264.0 383.0,262.9 384.4,261.7 385.9,260.7 387.4,259.7 389.0,258.9 390.6,258.1 392.3,257.3 394.0,256.7 395.7,256.2 397.5,255.7 399.3,255.4 401.1,255.1 402.9,254.9 404.7,254.9 406.5,254.9 408.3,255.0 410.1,255.2 411.9,255.5 413.7,255.9 415.4,256.4 417.2,257.0 418.8,257.6 420.5,258.4 422.1,259.2 423.7,260.1 425.2,261.1 426.5,260.4 425.4,258.6 424.4,256.7 423.5,254.8 422.7,252.8 422.0,250.8 421.4,248.8 420.9,246.7 420.6,244.6 420.3,242.5 420.1,240.3 420.1,238.2 420.2,236.1 420.3,234.0 420.6,231.8 421.0,229.7 421.5,227.7 422.1,225.6 422.9,223.6 423.7,221.7 424.6,219.7 425.6,217.9 426.8,216.1 428.0,214.3 429.3,212.6 430.7,211.0 432.2,209.5 433.7,208.0 435.3,206.6 437.0,205.3 438.8,204.1 440.6,203.0 442.5,202.0 444.4,201.1 446.4,200.3 448.4,199.6 450.4,199.0 452.5,198.5 454.6,198.1 456.7,197.8 458.8,197.7 461.0,197.6 463.1,197.7 465.2,197.8 467.3,198.1 469.4,198.5 471.5,199.0 473.6,199.6 475.6,200.3 477.5,201.1 476.8,202.8 477.6,201.5 478.5,200.2 479.5,199.0 480.5,197.8 481.6,196.7 482.8,195.6 484.0,194.6 485.2,193.7 486.5,192.8 487.8,192.0 489.2,191.2 490.6,190.5 492.1,189.9 493.5,189.4 495.0,188.9 496.5,188.5 498.1,188.2 499.6,188.0 501.2,187.8 502.7,187.8 504.3,187.8 505.9,187.9 507.4,188.0 509.0,188.3 509.0,188.1 510.0,186.9 511.1,185.7 512.1,184.5 513.2,183.3 514.3,182.2 515.4,181.0 516.6,179.9 517.8,178.9 519.1,177.9 520.4,176.9 521.7,176.0 523.1,175.2 524.7,174.3 526.3,173.5 528.0,172.7 529.7,171.9 531.5,171.2 533.4,170.5 535.2,170.0 537.1,169.5 539.1,169.1 541.0,168.9 543.0,168.8 545.0,168.8 547.6,169.1 550.4,169.5 553.3,170.2 556.3,171.0 559.3,172.1 562.4,173.2 565.4,174.6 568.3,176.0 571.1,177.6 573.8,179.3 576.2,181.0 578.4,182.9 580.3,184.8 582.2,187.0 583.9,189.3 585.5,191.8 587.0,194.4 588.4,197.0 589.7,199.7 590.8,202.4 591.9,205.1 592.8,207.8 593.6,210.3 594.3,212.7 594.7,214.5 595.1,216.4 595.3,218.2 595.5,220.0 595.6,221.8 595.6,223.6 595.6,225.4 595.5,227.1 595.4,228.8 595.3,230.5 595.2,232.2 595.1,233.8 595.0,235.2 594.9,236.5 594.8,237.8 594.7,239.1 594.6,240.4 594.4,241.6 594.2,242.9 594.0,244.1 593.7,245.3 593.4,246.5 593.0,247.7 592.5,248.8 592.5,248.7 595.1,249.9 597.6,251.2 600.1,252.6 602.5,254.1 604.8,255.8 607.0,257.6 609.1,259.5 611.1,261.5 613.0,263.6 614.8,265.7 616.5,268.0 618.0,270.4 619.5,272.9 620.8,275.4 621.9,278.0 623.0,280.6 623.8,283.3 624.6,286.0 625.2,288.8 625.7,291.6 626.0,294.4 626.2,297.2 626.2,300.1 626.1,302.9 625.8,305.7 625.4,308.5 624.8,311.3 624.1,314.1 623.2,316.8 622.3,319.4 621.1,322.0 619.9,324.6 618.5,327.0 618.5,327.2 620.7,328.2 622.7,329.3 624.7,330.4 626.7,331.7 628.6,333.1 630.4,334.5 632.1,336.1 633.7,337.7 635.3,339.5 636.8,341.3 638.1,343.2 639.4,345.1 640.6,347.1 641.6,349.2 642.6,351.3 643.4,353.5 644.2,355.7 644.8,357.9 645.3,360.2 645.6,362.5 645.9,364.8 646.0,367.1 646.1,369.5 646.0,371.8 645.7,374.1 645.4,376.4 644.9,378.7 644.4,380.9 643.7,383.1 642.9,385.3 641.9,387.5 640.9,389.5 639.8,391.6 638.5,393.5 637.2,395.4 635.7,397.3 634.2,399.0 632.6,400.7 630.9,402.3 629.1,403.8 627.3,405.2 625.3,406.5 623.3,407.7 621.3,408.8 619.2,409.8 617.0,410.6 614.8,411.4 612.6,412.0 610.3,412.6 608.0,413.0 605.7,413.3 603.4,413.5 601.1,413.5 598.8,413.5 596.4,413.3 594.1,413.0 591.8,412.5 589.6,412.0 587.4,411.3 585.2,410.6 583.0,409.7 583.0,409.6 580.2,410.8 577.4,411.8 574.5,412.7 571.6,413.4 568.6,414.0 565.7,414.5 562.7,414.7 559.7,414.9 556.7,414.8 553.7,414.6 550.7,414.3 547.7,413.8 544.8,413.1 541.9,412.3 539.1,411.4 536.3,410.3 533.5,409.0 530.9,407.6 528.3,406.1 525.8,404.4 523.4,402.7 521.1,400.8 518.8,398.7 516.7,396.6 514.7,394.3 512.8,392.0 511.1,389.6 509.5,387.0 508.0,384.4 506.6,381.7 505.4,379.0 504.4,376.2 494.0,364.0 482.3,388.5 480.6,391.0 478.8,393.4 476.9,395.7 474.8,397.9 472.7,400.0 470.4,402.0 468.0,403.9 465.6,405.6 463.1,407.3 460.5,408.7 457.8,410.1 455.0,411.3 452.2,412.4 449.3,413.3 446.4,414.1 443.5,414.7 440.5,415.2 437.5,415.5 434.5,415.6 431.5,415.7 428.5,415.5 425.5,415.2 422.5,414.8 419.6,414.1 416.7,413.4 413.8,412.5 411.0,411.4 408.2,410.2 405.5,408.9 402.9,407.4 400.4,405.8 397.9,404.1 395.5,402.2 393.3,400.3 391.1,398.2 389.1,396.0 387.1,393.7" fill="#b5e61d"/>
<polyline points="387.1,393.6 385.0,393.6 383.0,393.4 380.9,393.2 378.9,392.8 376.9,392.4 374.9,391.8 373.0,391.2 371.1,390.4 369.2,389.5 367.4,388.6 365.6,387.5 363.9,386.4 362.3,385.1 360.7,383.8 359.2,382.4 357.7,381.0 356.4,379.4 355.1,377.8 353.9,376.1 352.8,374.4 351.8,372.6 350.9,370.7 350.1,368.9 349.4,366.9 348.8,365.0 348.3,363.0 347.8,361.0 347.5,358.9 347.4,356.9 347.3,354.8 347.3,352.8 347.4,350.7 347.7,348.7 348.0,346.6 348.4,344.6 349.0,342.7 349.6,340.7 350.4,338.8 351.3,336.9 352.2,335.1 353.2,333.3 354.4,331.6 355.6,330.0 356.9,328.4 358.3,326.8 359.8,325.4 361.3,324.0 362.9,322.8 364.6,321.6 366.3,320.5 368.1,319.4 369.9,318.5 371.8,317.7 373.8,317.0 375.7,316.3 377.7,315.8 379.7,315.4 381.7,315.1" fill="none" stroke="#000" stroke-width="3.6" stroke-linecap="round" stroke-linejoin="round"/>
<polyline points="381.6,315.7 380.3,314.4 379.1,313.1 377.9,311.7 376.8,310.3 375.8,308.8 374.8,307.2 374.0,305.6 373.2,304.0 372.5,302.3 371.9,300.6 371.4,298.9 371.0,297.1 370.7,295.3 370.4,293.5 370.3,291.7 370.2,289.9 370.3,288.1 370.4,286.3 370.7,284.5 371.0,282.7 371.4,280.9 371.9,279.2 372.5,277.4 373.2,275.8 374.0,274.1 374.8,272.5 375.8,271.0 376.8,269.5 377.9,268.0 379.1,266.6 380.3,265.3 381.6,264.0 383.0,262.9 384.4,261.7 385.9,260.7 387.4,259.7 389.0,258.9 390.6,258.1 392.3,257.3 394.0,256.7 395.7,256.2 397.5,255.7 399.3,255.4 401.1,255.1 402.9,254.9 404.7,254.9 406.5,254.9 408.3,255.0 410.1,255.2 411.9,255.5 413.7,255.9 415.4,256.4 417.2,257.0 418.8,257.6 420.5,258.4 422.1,259.2 423.7,260.1 425.2,261.1" fill="none" stroke="#000" stroke-width="3.6" stroke-linecap="round" stroke-linejoin="round"/>
<polyline points="426.5,260.4 425.4,258.6 424.4,256.7 423.5,254.8 422.7,252.8 422.0,250.8 421.4,248.8 420.9,246.7 420.6,244.6 420.3,242.5 420.1,240.3 420.1,238.2 420.2,236.1 420.3,234.0 420.6,231.8 421.0,229.7 421.5,227.7 422.1,225.6 422.9,223.6 423.7,221.7 424.6,219.7 425.6,217.9 426.8,216.1 428.0,214.3 429.3,212.6 430.7,211.0 432.2,209.5 433.7,208.0 435.3,206.6 437.0,205.3 438.8,204.1 440.6,203.0 442.5,202.0 444.4,201.1 446.4,200.3 448.4,199.6 450.4,199.0 452.5,198.5 454.6,198.1 456.7,197.8 458.8,197.7 461.0,197.6 463.1,197.7 465.2,197.8 467.3,198.1 469.4,198.5 471.5,199.0 473.6,199.6 475.6,200.3 477.5,201.1" fill="none" stroke="#000" stroke-width="3.6" stroke-linecap="round" stroke-linejoin="round"/>
<polyline points="476.8,202.8 477.6,201.5 478.5,200.2 479.5,199.0 480.5,197.8 481.6,196.7 482.8,195.6 484.0,194.6 485.2,193.7 486.5,192.8 487.8,192.0 489.2,191.2 490.6,190.5 492.1,189.9 493.5,189.4 495.0,188.9 496.5,188.5 498.1,188.2 499.6,188.0 501.2,187.8 502.7,187.8 504.3,187.8 505.9,187.9 507.4,188.0 509.0,188.3" fill="none" stroke="#000" stroke-width="3.6" stroke-linecap="round" stroke-linejoin="round"/>
<polyline points="509.0,188.1 510.0,186.9 511.1,185.7 512.1,184.5 513.2,183.3 514.3,182.2 515.4,181.0 516.6,179.9 517.8,178.9 519.1,177.9 520.4,176.9 521.7,176.0 523.1,175.2 524.7,174.3 526.3,173.5 528.0,172.7 529.7,171.9 531.5,171.2 533.4,170.5 535.2,170.0 537.1,169.5 539.1,169.1 541.0,168.9 543.0,168.8 545.0,168.8 547.6,169.1 550.4,169.5 553.3,170.2 556.3,171.0 559.3,172.1 562.4,173.2 565.4,174.6 568.3,176.0 571.1,177.6 573.8,179.3 576.2,181.0 578.4,182.9 580.3,184.8 582.2,187.0 583.9,189.3 585.5,191.8 587.0,194.4 588.4,197.0 589.7,199.7 590.8,202.4 591.9,205.1 592.8,207.8 593.6,210.3 594.3,212.7 594.7,214.5 595.1,216.4 595.3,218.2 595.5,220.0 595.6,221.8 595.6,223.6 595.6,225.4 595.5,227.1 595.4,228.8 595.3,230.5 595.2,232.2 595.1,233.8 595.0,235.2 594.9,236.5 594.8,237.8 594.7,239.1 594.6,240.4 594.4,241.6 594.2,242.9 594.0,244.1 593.7,245.3 593.4,246.5 593.0,247.7 592.5,248.8" fill="none" stroke="#000" stroke-width="3.6" stroke-linecap="round" stroke-linejoin="round"/>
<polyline points="592.5,248.7 595.1,249.9 597.6,251.2 600.1,252.6 602.5,254.1 604.8,255.8 607.0,257.6 609.1,259.5 611.1,261.5 613.0,263.6 614.8,265.7 616.5,268.0 618.0,270.4 619.5,272.9 620.8,275.4 621.9,278.0 623.0,280.6 623.8,283.3 624.6,286.0 625.2,288.8 625.7,291.6 626.0,294.4 626.2,297.2 626.2,300.1 626.1,302.9 625.8,305.7 625.4,308.5 624.8,311.3 624.1,314.1 623.2,316.8 622.3,319.4 621.1,322.0 619.9,324.6 618.5,327.0" fill="none" stroke="#000" stroke-width="3.6" stroke-linecap="round" stroke-linejoin="round"/>
<polyline points="618.5,327.2 620.7,328.2 622.7,329.3 624.7,330.4 626.7,331.7 628.6,333.1 630.4,334.5 632.1,336.1 633.7,337.7 635.3,339.5 636.8,341.3 638.1,343.2 639.4,345.1 640.6,347.1 641.6,349.2 642.6,351.3 643.4,353.5 644.2,355.7 644.8,357.9 645.3,360.2 645.6,362.5 645.9,364.8 646.0,367.1 646.1,369.5 646.0,371.8 645.7,374.1 645.4,376.4 644.9,378.7 644.4,380.9 643.7,383.1 642.9,385.3 641.9,387.5 640.9,389.5 639.8,391.6 638.5,393.5 637.2,395.4 635.7,397.3 634.2,399.0 632.6,400.7 630.9,402.3 629.1,403.8 627.3,405.2 625.3,406.5 623.3,407.7 621.3,408.8 619.2,409.8 617.0,410.6 614.8,411.4 612.6,412.0 610.3,412.6 608.0,413.0 605.7,413.3 603.4,413.5 601.1,413.5 598.8,413.5 596.4,413.3 594.1,413.0 591.8,412.5 589.6,412.0 587.4,411.3 585.2,410.6 583.0,409.7" fill="none" stroke="#000" stroke-width="3.6" stroke-linecap="round" stroke-linejoin="round"/>
<polyline points="583.0,409.6 580.2,410.8 577.4,411.8 574.5,412.7 571.6,413.4 568.6,414.0 565.7,414.5 562.7,414.7 559.7,414.9 556.7,414.8 553.7,414.6 550.7,414.3 547.7,413.8 544.8,413.1 541.9,412.3 539.1,411.4 536.3,410.3 533.5,409.0 530.9,407.6 528.3,406.1 525.8,404.4 523.4,402.7 521.1,400.8 518.8,398.7 516.7,396.6 514.7,394.3 512.8,392.0 511.1,389.6 509.5,387.0 508.0,384.4 506.6,381.7 505.4,379.0 504.4,376.2" fill="none" stroke="#000" stroke-width="3.6" stroke-linecap="round" stroke-linejoin="round"/>
<polyline points="482.3,388.5 480.6,391.0 478.8,393.4 476.9,395.7 474.8,397.9 472.7,400.0 470.4,402.0 468.0,403.9 465.6,405.6 463.1,407.3 460.5,408.7 457.8,410.1 455.0,411.3 452.2,412.4 449.3,413.3 446.4,414.1 443.5,414.7 440.5,415.2 437.5,415.5 434.5,415.6 431.5,415.7 428.5,415.5 425.5,415.2 422.5,414.8 419.6,414.1 416.7,413.4 413.8,412.5 411.0,411.4 408.2,410.2 405.5,408.9 402.9,407.4 400.4,405.8 397.9,404.1 395.5,402.2 393.3,400.3 391.1,398.2 389.1,396.0 387.1,393.7" fill="none" stroke="#000" stroke-width="3.6" stroke-linecap="round" stroke-linejoin="round"/>
<polygon points="494.4,364 505,378.5 523.5,557.5 465.5,557.5 482.5,386" fill="#80300e" stroke="#000" stroke-width="3.6" stroke-linejoin="miter" stroke-miterlimit="10"/>
<rect x="778.5" y="505" width="50" height="52.5" fill="#80300e" stroke="#000" stroke-width="3.6"/>
<polygon points="802.5,186 856,298 827,298 894.5,407.5 855,407.5 920.5,505 683.5,505 748.5,407.5 711,407.5 778.5,298 750,298" fill="#74c14f" stroke="#000" stroke-width="3.6" stroke-linejoin="miter" stroke-miterlimit="10"/>
</g>
<rect x="974.5" y="435.5" width="3" height="3" fill="#fff" stroke="#5a6576" stroke-width="1"/>
<rect x="974.5" y="760.5" width="3" height="3" fill="#fff" stroke="#5a6576" stroke-width="1"/>
<rect x="487.5" y="760.5" width="3" height="3" fill="#fff" stroke="#5a6576" stroke-width="1"/>
<rect x="0" y="785" width="1024" height="1" fill="#e6ecf4"/>
<rect x="0" y="786" width="1024" height="2" fill="#26303c"/>
</svg>
</body></html>
